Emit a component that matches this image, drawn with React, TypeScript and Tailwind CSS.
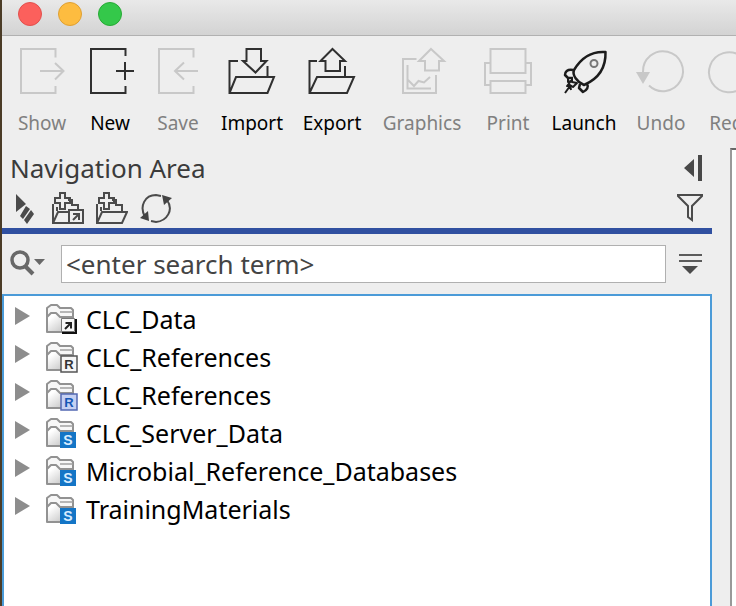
import type { ReactNode } from "react";

const labelFont = "font-['Noto_Sans','Open_Sans',sans-serif]";

function ToolIcon({ children }: { children: ReactNode }) {
  return (
    <svg viewBox="0 0 48 48" className="size-12 overflow-visible" fill="none" stroke="currentColor" strokeWidth="2" aria-hidden="true">
      {children}
    </svg>
  );
}

const tools: { label: string; width: string; enabled: boolean; icon: ReactNode }[] = [
  {
    label: "Show",
    width: "w-12",
    enabled: false,
    icon: <path d="M37.5 10.5V2H3V46H37.5V39M22 24H45M37 16L45.5 24L37 32.5" />,
  },
  {
    label: "New",
    width: "w-12",
    enabled: true,
    icon: <path d="M39.5 9V2H5V46H39.5V39M30 24H48M39 15V33" />,
  },
  {
    label: "Save",
    width: "w-12",
    enabled: false,
    icon: <path d="M39.5 10.5V2H5V46H39.5V39M44 24H21M30 15.5L21 24L30 32.5" />,
  },
  {
    label: "Import",
    width: "w-15",
    enabled: true,
    icon: <path d="M10 14H1.5V46H39.5L46 30H8L1.5 46M39.5 19V30M18.500 2H33V14H38.500L27.500 25.500L15 14H18.500Z" />,
  },
  {
    label: "Export",
    width: "w-15",
    enabled: true,
    icon: <path d="M9 14H1.500V46H39L46 30H9L1.500 46M37 19V30M24.500 2L37 14H32V24H17.500V14H12.500Z" />,
  },
  {
    label: "Graphics",
    width: "w-20",
    enabled: false,
    icon: (
      <path d="M18.500 12H5V46H38V28M9.500 18V41.500H33M10 33L16 39L20.500 34L26 35.500L32 30M33 2L46 14H41V23.500H27V14H21Z" />
    ),
  },
  {
    label: "Print",
    width: "w-13",
    enabled: false,
    icon: <path d="M6.500 2H41.500V26H6.500ZM6.500 34H41.500V46H6.500ZM6.500 16H1V38H6.500M41.500 16H47V38H41.500" />,
  },
  {
    label: "Launch",
    width: "w-15",
    enabled: true,
    icon: (
      <g strokeLinejoin="round" stroke="#1c1c1c">
        <path d="M45.500 5C32 4 21 11 14 23C12 28 17 35 24 38C38 32 46 21 45.500 5Z" strokeWidth="2.500" />
        <path d="M13 23C7 22 5 25 5 28L8 31L13 31M27 37C29 40 27 43 23 45L19 41L20 37" strokeWidth="2.500" />
        <path d="M8 31V35L11 34L7 39L10 39L5 46M12 31L12 35L17 36L13 40L10 38L11 43" />
        <circle cx="34" cy="16.500" r="3.500" stroke="#777777" />
      </g>
    ),
  },
  {
    label: "Undo",
    width: "w-[54px]",
    enabled: false,
    icon: (
      <>
        <path d="M6 25A20 20 0 1 1 12 38.500" />
        <path d="M-1 25H13L6 37Z" fill="currentColor" stroke="none" />
      </>
    ),
  },
  {
    label: "Redo",
    width: "w-12",
    enabled: false,
    icon: (
      <>
        <path d="M41 25A20 20 0 1 0 36 38.500" />
        <path d="M34 25H48L41 37Z" fill="currentColor" stroke="none" />
      </>
    ),
  },
];

function NavIcon({ label, children }: { label: string; children: ReactNode }) {
  return (
    <button type="button" aria-label={label} className="size-8">
      <svg viewBox="0 0 32 32" className="size-8" fill="none" stroke="#4b4b4b" strokeWidth="2" aria-hidden="true">
        {children}
      </svg>
    </button>
  );
}

type Badge = "link" | "ref" | "refBlue" | "server";

function FolderIcon({ badge }: { badge: Badge }) {
  return (
    <svg viewBox="0 0 32 32" className="size-8 shrink-0" fill="none" aria-hidden="true">
      <defs>
        <linearGradient id={`front-${badge}`} x1="0" y1="0" x2="1" y2="1">
          <stop offset="0.2" stopColor="#ffffff" />
          <stop offset="1" stopColor="#b4b4b4" />
        </linearGradient>
      </defs>
      <path d="M1 28V5L5 2H11L14 5H25L27 7V28Z" fill="#f7f7f7" stroke="#929292" strokeWidth="2" strokeLinejoin="round" />
      <path d="M14 9H27" stroke="#a0a0a0" strokeWidth="1.500" />
      <path
        d="M1 29V14L5 10H10L14 14H27V29Z"
        fill={`url(#front-${badge})`}
        stroke="#929292"
        strokeWidth="2"
        strokeLinejoin="round"
      />
      {badge === "link" && (
        <>
          <path d="M16 30H30V16" stroke="#111111" strokeWidth="2" />
          <path d="M15.500 15.500H28.500V28.500H15.500Z" fill="#f8f8f8" stroke="#777777" />
          <path d="M19 26L24 21M19.500 20H25V25.500" stroke="#222222" strokeWidth="2" />
        </>
      )}
      {(badge === "ref" || badge === "refBlue") && (
        <>
          <path
            d="M15 15H31V31H15Z"
            fill={badge === "ref" ? "#f5f5f5" : "#c5d0f2"}
            stroke={badge === "ref" ? "#555555" : "#5368b2"}
            strokeWidth="1.500"
          />
          <text
            x="23"
            y="28"
            textAnchor="middle"
            fontSize="13"
            fontWeight="700"
            fill={badge === "ref" ? "#333333" : "#1557b5"}
            className="font-['Liberation_Sans',sans-serif]"
          >
            R
          </text>
        </>
      )}
      {badge === "server" && (
        <>
          <path d="M14 15H30V31H14Z" fill="#1475c6" />
          <text
            x="22"
            y="28"
            textAnchor="middle"
            fontSize="14"
            fontWeight="700"
            fill="#d8ecff"
            className="font-['Liberation_Sans',sans-serif]"
          >
            S
          </text>
        </>
      )}
    </svg>
  );
}

const locations: { name: string; badge: Badge }[] = [
  { name: "CLC_Data", badge: "link" },
  { name: "CLC_References", badge: "ref" },
  { name: "CLC_References", badge: "refBlue" },
  { name: "CLC_Server_Data", badge: "server" },
  { name: "Microbial_Reference_Databases", badge: "server" },
  { name: "TrainingMaterials", badge: "server" },
];

function TitleBar() {
  return (
    <header className="flex h-9 items-start gap-4 border-b border-[#b1b1b1] bg-linear-to-b from-[#e9e9e9] to-[#d3d3d3] px-4 pt-0.5">
      <button type="button" aria-label="Close" className="size-6 rounded-full border border-[#e2504d] bg-[#fc605c]" />
      <button type="button" aria-label="Minimize" className="size-6 rounded-full border border-[#dfa033] bg-[#fdbc40]" />
      <button type="button" aria-label="Zoom" className="size-6 rounded-full border border-[#27aa35] bg-[#34c84a]" />
    </header>
  );
}

function Toolbar() {
  return (
    <div role="toolbar" className="flex gap-5 overflow-hidden pt-[11px] pb-[13px] pl-4">
      {tools.map((tool) => (
        <button
          key={tool.label}
          type="button"
          disabled={!tool.enabled}
          className={`flex shrink-0 flex-col items-center gap-4 ${tool.width} ${tool.enabled ? "text-[#303030]" : "text-[#c8c8c8]"}`}
        >
          <ToolIcon>{tool.icon}</ToolIcon>
          <span className={`text-[19px] leading-6 whitespace-nowrap ${tool.enabled ? "text-black" : "text-[#808080]"}`}>
            {tool.label}
          </span>
        </button>
      ))}
    </div>
  );
}

function NavigationArea() {
  return (
    <section className="flex min-w-0 flex-1 flex-col pt-0.5">
      <div className="flex h-9 items-center justify-between pr-2 pl-2">
        <h1 className="text-[26px] leading-9 text-[#3b3b3b]">Navigation Area</h1>
        <button type="button" aria-label="Collapse" className="size-8">
          <svg viewBox="0 0 32 32" className="size-8" fill="#484848" aria-hidden="true">
            <path d="M12 16L22 7V25ZM26 3H30V29H26Z" />
          </svg>
        </button>
      </div>
      <div className="flex items-center gap-3 border-b-6 border-[#3050a0] pt-1.5 pr-1.5 pb-1 pl-1.5">
        <NavIcon label="Select">
          <path d="M8 2L18 12L8 20ZM12 24L18 14L22 17L15 27ZM16 28L23 18L26 22L19 32Z" fill="#4b4b4b" stroke="none" />
        </NavIcon>
        <NavIcon label="Add location">
          <path d="M8 1H13V6H18V11H13V17H8V11H3V6H8ZM1 12V31H16M1 31L6 20H16M5 15V19M16 8H20V13H26V17" />
          <path d="M17 18H31V31H17Z" />
          <path d="M21 28L26 23M21 22H27V28" />
        </NavIcon>
        <NavIcon label="Add folder">
          <path d="M8 1H13V6H18V11H13V17H8V11H3V6H8ZM1 12V31H26L31 20H6L1 31M16 8H20V13H26V20M5 15V19" />
        </NavIcon>
        <NavIcon label="Refresh">
          <path d="M5 25C-1 14 5 3 16 3L21 4M27 8C34 18 27 29 16 30L11 29" />
          <path d="M22 3L32 6L24 13ZM9 29L0 26L8 19Z" fill="#444444" stroke="none" />
        </NavIcon>
        <div className="flex-1" />
        <NavIcon label="Filter">
          <path d="M4 4V3H28V4L18 14V28L14 25V14Z" />
        </NavIcon>
      </div>
      <div className="flex items-center gap-3 py-[11px] pr-1.5 pl-2">
        <button type="button" aria-label="Search options" className="h-8 w-[39px] shrink-0">
          <svg viewBox="0 0 39 32" className="h-8 w-[39px]" fill="none" stroke="#686868" aria-hidden="true">
            <circle cx="10" cy="12" r="8" strokeWidth="3.500" />
            <path d="M15 18L23 26" strokeWidth="4" />
            <path d="M24 11H35L29.500 17Z" fill="#686868" stroke="none" />
          </svg>
        </button>
        <input
          type="text"
          aria-label="Search term"
          placeholder="<enter search term>"
          className="h-[38px] min-w-0 flex-1 border border-[#b0b0b0] bg-white px-1 text-[26px] text-[#3b3b3b] outline-none placeholder:text-[#444444]"
        />
        <button type="button" aria-label="Search menu" className="-ml-1 size-8 shrink-0">
          <svg viewBox="0 0 32 32" className="size-8" fill="none" stroke="#5b5b5b" strokeWidth="2" aria-hidden="true">
            <path d="M5 7H28M5 13H28" />
            <path d="M8 18H24L16 26Z" fill="#4b4b4b" stroke="none" />
          </svg>
        </button>
      </div>
      <ul className="flex-1 border-2 border-b-0 border-[#4b9bd8] bg-white pt-1">
        {locations.map((location, index) => (
          <li key={index} className="flex h-[38px] items-center pl-2.5">
            <button type="button" aria-label={`Expand ${location.name}`} className="size-6 shrink-0">
              <svg viewBox="0 0 24 24" className="size-6" fill="#8d8d8d" aria-hidden="true">
                <path d="M1 0V18L16 9Z" />
              </svg>
            </button>
            <button type="button" className="ml-2 flex items-center gap-2">
              <FolderIcon badge={location.badge} />
              <span className="text-[25px] leading-9 whitespace-nowrap text-black">{location.name}</span>
            </button>
          </li>
        ))}
      </ul>
    </section>
  );
}

export default function App() {
  return (
    <div className={`flex min-h-screen flex-col border-l-2 border-[#4b3c27] bg-[#eeeeee] ${labelFont}`}>
      <TitleBar />
      <Toolbar />
      <main className="flex flex-1 gap-[18px]">
        <NavigationArea />
        <aside className="w-1.5 shrink-0 border-t-2 border-l-2 border-t-[#666666] border-l-[#999999] bg-white" />
      </main>
    </div>
  );
}
